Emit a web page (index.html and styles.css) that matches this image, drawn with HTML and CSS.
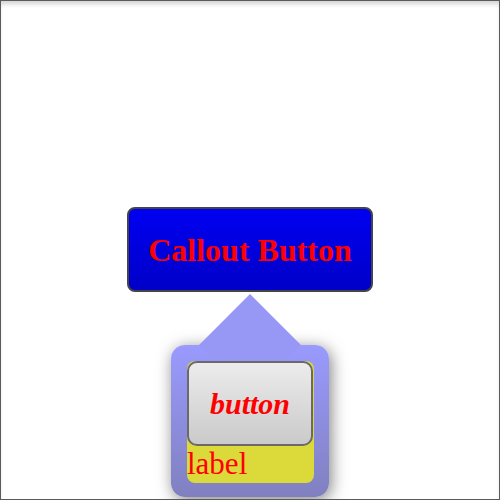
FILE: index.html
```html
<!DOCTYPE html>
<html lang="en">
<head>
    <meta charset="UTF-8">
    <meta name="viewport" content="width=device-width, initial-scale=1.0">
    <title>Callout Button</title>
    <link rel="stylesheet" href="styles.css">
</head>
<body>
    <div class="frame">
        <div class="anchor">
            <button class="callout-button" type="button">Callout Button</button>

            <div class="callout">
                <div class="callout-arrow"></div>
                <div class="callout-content">
                    <button class="inner-button" type="button">button</button>
                    <span class="inner-label">label</span>
                </div>
            </div>
        </div>
    </div>
</body>
</html>
```

FILE: styles.css
```css
html, body {
    margin: 0;
    padding: 0;
    background: #fff;
}
.frame {
    position: relative;
    width: 500px;
    height: 500px;
    box-sizing: border-box;
    border: 1px solid #5a5a5a;
    box-shadow: inset 0 5px 5px -2px rgba(0, 0, 0, 0.18);
    overflow: hidden;
    display: flex;
    align-items: center;
    justify-content: center;
    font-family: "Liberation Serif", "Times New Roman", serif;
}
.anchor {
    position: relative;
    margin-top: -2px;
}
.callout-button {
    display: flex;
    align-items: center;
    justify-content: center;
    width: 246px;
    height: 85px;
    box-sizing: border-box;
    border: 2px solid #444;
    border-radius: 8px;
    background: linear-gradient(#0000f2, #0000c8);
    color: #ff0000;
    font-family: inherit;
    font-size: 32px;
    font-weight: bold;
    padding: 2px 0 0;
}
.callout {
    position: absolute;
    top: calc(100% + 53px);
    left: 50%;
    transform: translateX(-50%);
    width: 158px;
    box-sizing: border-box;
    padding: 16px 15px 14px 16px;
    border-radius: 14px;
    background: linear-gradient(#9a9aff, #8080c0);
    box-shadow: 2px 3px 16px rgba(0, 0, 0, 0.5);
}
.callout-arrow {
    position: absolute;
    top: -36px;
    left: 50%;
    width: 72px;
    height: 72px;
    margin-left: -36px;
    background: #9797f6;
    transform: rotate(45deg);
    z-index: -1;
}
.callout-content {
    position: relative;
    display: flex;
    flex-direction: column;
    background: #dcd93a;
    border-radius: 8px;
    height: 122px;
}
.inner-button {
    width: 126px;
    height: 85px;
    box-sizing: border-box;
    border: 2px solid #6a6a6a;
    border-radius: 10px;
    background: linear-gradient(#ececec, #cacaca);
    color: #ff0000;
    font-family: inherit;
    font-size: 30px;
    font-weight: bold;
    font-style: italic;
    padding: 2px 0 0;
}
.inner-label {
    color: #ff0000;
    font-size: 31px;
    line-height: 36px;
}
```
